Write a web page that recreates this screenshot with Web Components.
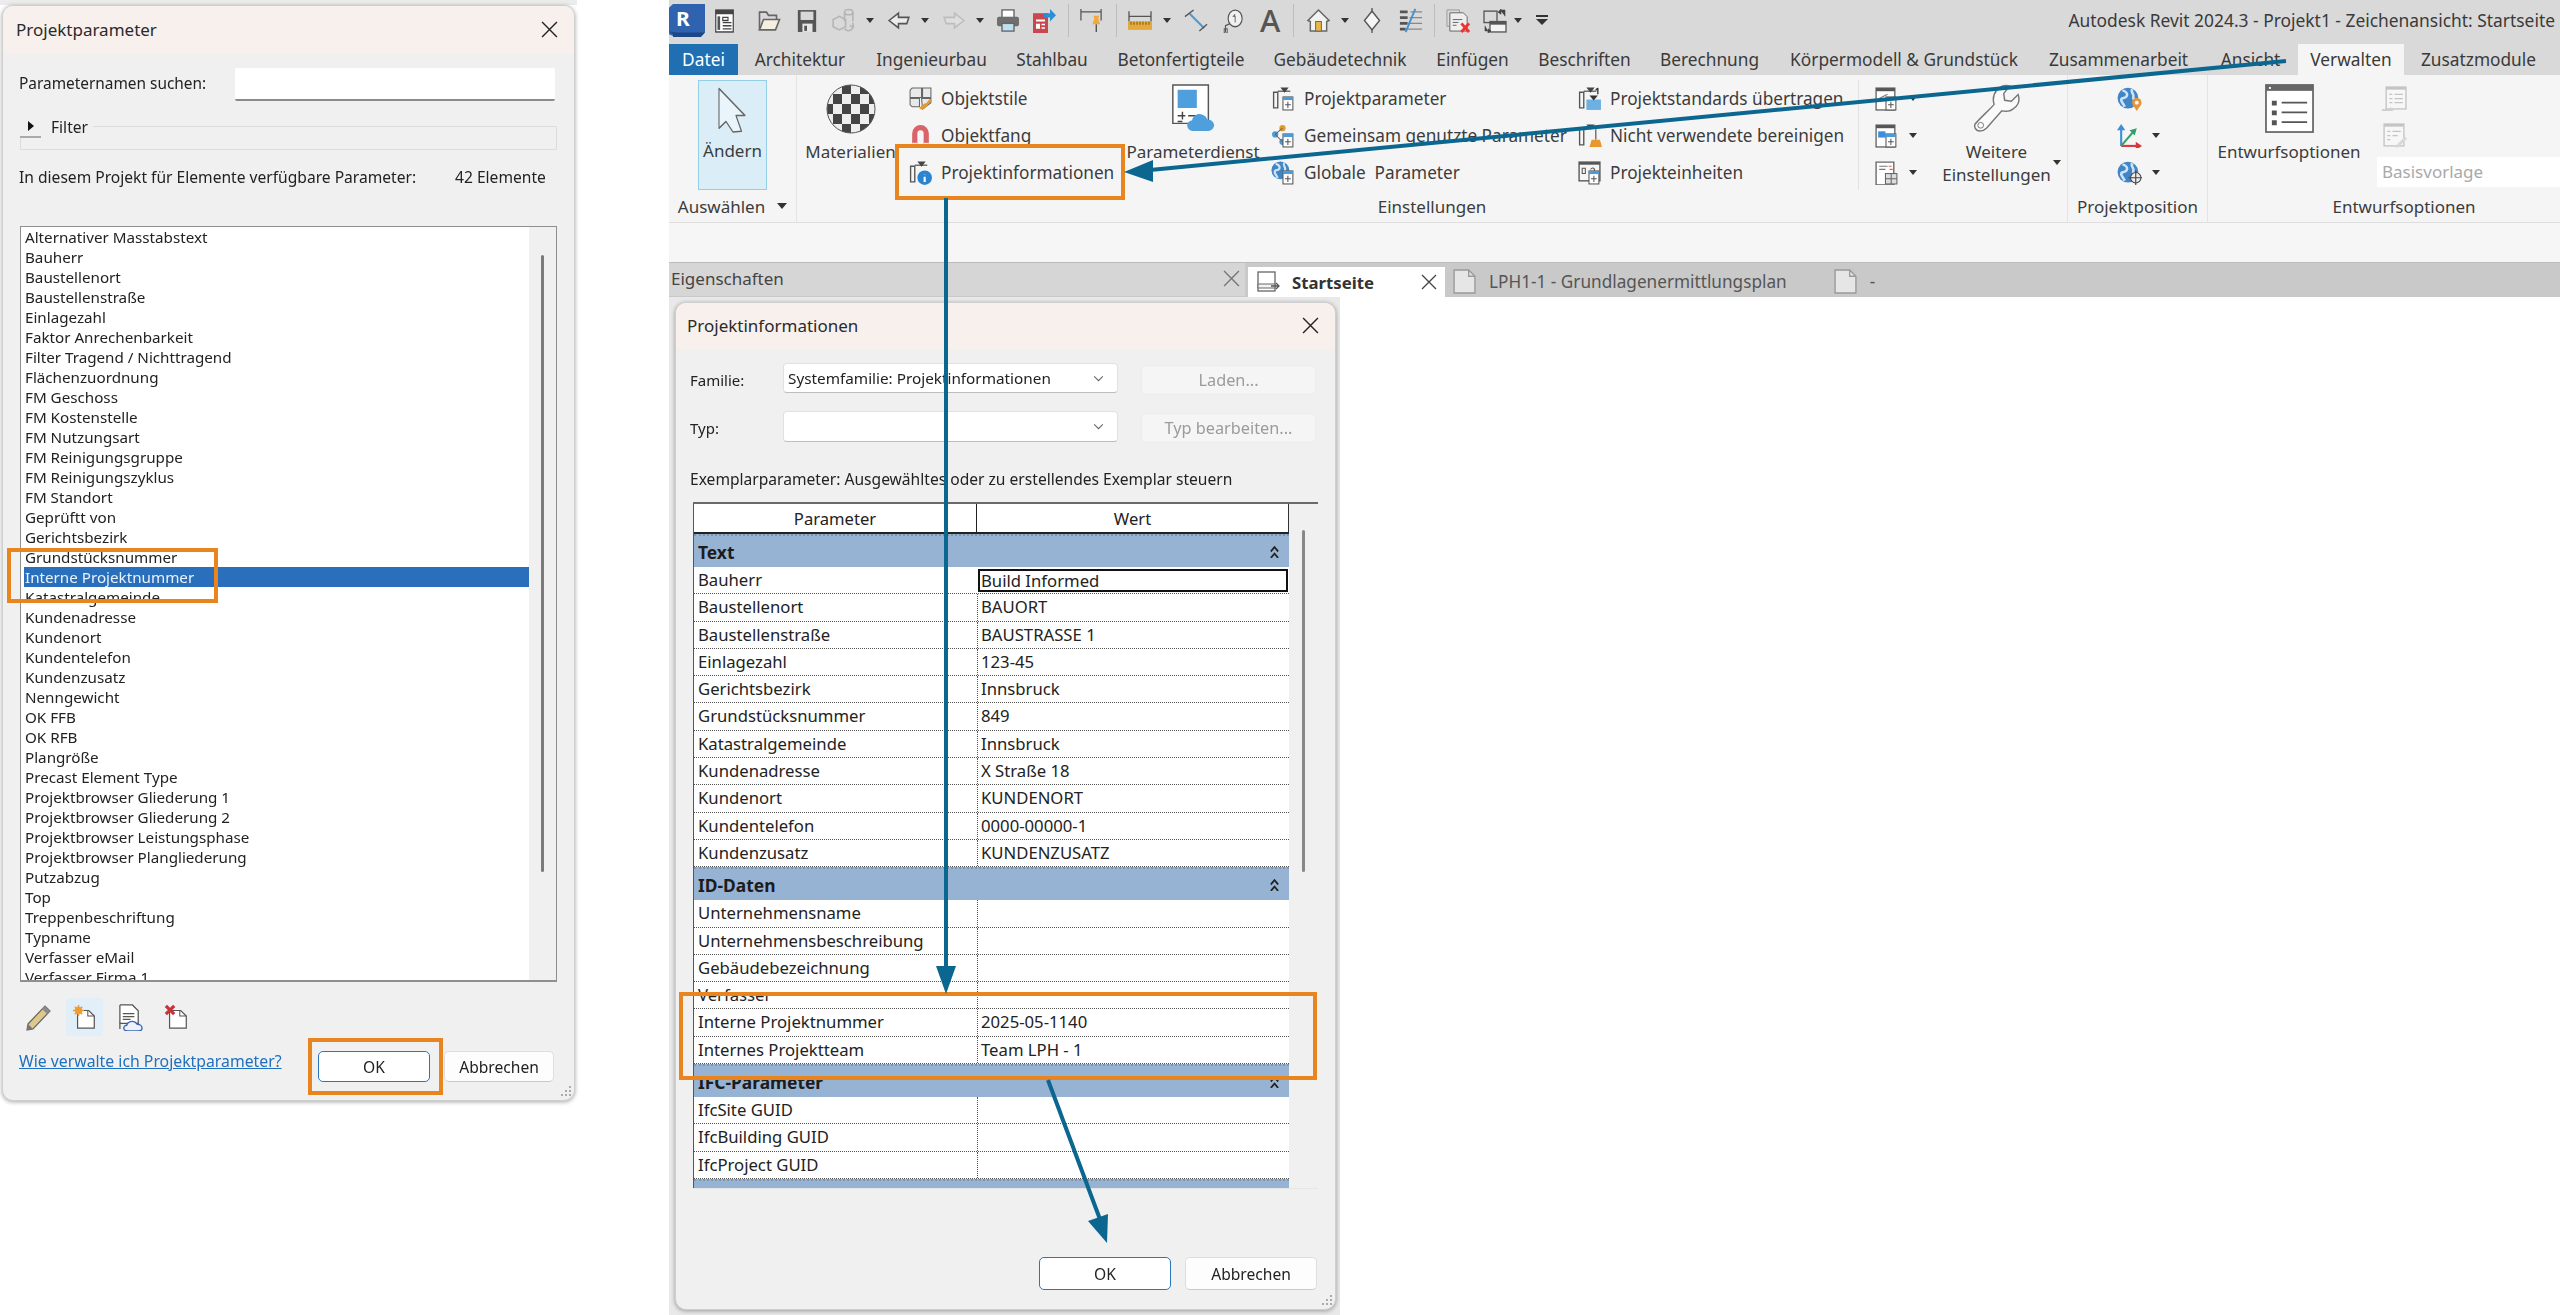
<!DOCTYPE html>
<html lang="de">
<head>
<meta charset="utf-8">
<title>Projektparameter</title>
<style>
  html, body { margin: 0; padding: 0; }
  body {
    width: 2560px; height: 1315px; overflow: hidden; background: #fff; position: relative;
    display: flex; font-family: "Noto Sans", "Open Sans", sans-serif; color: #222;
    filter: blur(.4px);
  }
</style>
</head>
<body>

<params-window>
  <rv-dialog heading="Projektparameter">
    <div style="padding:14px 17px 0;display:flex;flex-direction:column">
      <search-row label="Parameternamen suchen:"></search-row>
      <filter-group></filter-group>
      <count-row label="In diesem Projekt für Elemente verfügbare Parameter:" count="42 Elemente"></count-row>
      <param-list selected="Interne Projektnummer"></param-list>
      <tool-row></tool-row>
      <params-footer></params-footer>
    </div>
  </rv-dialog>
</params-window>

<revit-window>
  <qat-bar></qat-bar>
  <ribbon-tabs></ribbon-tabs>
  <revit-ribbon></revit-ribbon>
  <doc-bar></doc-bar>
  <dock-area>
    <rv-dialog heading="Projektinformationen" compact>
      <info-form></info-form>
    </rv-dialog>
  </dock-area>
</revit-window>

<annotation-layer></annotation-layer>

<script>
const tri = '<path d="M6 9h12l-6 7z" fill="#333"/>';
const protoBase = '<path d="M2.5 6h4v15h-4z" fill="none" stroke="#555" stroke-width="1.3"/><path d="M6.5 5h12" stroke="#555" stroke-width="1.2"/><path d="M9 1.5h8l-4 5z" fill="#444"/>';
const miniTable = '<rect x="11.5" y="10.5" width="9.5" height="12.5" fill="#fff" stroke="#555"/><rect x="11.5" y="10.5" width="9.5" height="3" fill="#4d9bd6"/><path d="M16.2 15v6M13.5 18h5.5" stroke="#555"/>';
const globe = '<circle cx="10" cy="11" r="9.5" fill="#3f86c8"/><path d="M5 4c3 1 5 2 4 5s-4 1-5 3 2 4 3 7M14 3c-2 3 2 4 1 7s3 3 4 2" fill="none" stroke="#cfe3f4" stroke-width="2.4"/>';

const ICONS = {
  props: [24, '<rect x="2" y="2" width="20" height="21" fill="#fff" stroke="#444" stroke-width="1.4"/><rect x="2" y="2" width="20" height="4" fill="#444"/><rect x="4" y="8" width="3" height="13" fill="#555"/><path d="M10 9h6v3h-6zM10 14h10M10 17h10M10 20h10" fill="none" stroke="#444" stroke-width="1.3"/>'],
  open: [24, '<path d="M2.5 21V4h7l2 3h8v4" fill="none" stroke="#666" stroke-width="1.6"/><path d="M2.5 21l4-10h16l-4 10z" fill="#f4efe0" stroke="#666" stroke-width="1.6"/>'],
  save: [24, '<path d="M2 2h20v21H2z" fill="#555"/><rect x="5" y="3.5" width="14" height="8" fill="#d8d8d8"/><rect x="7" y="15" width="11" height="8" fill="#e6e6e6"/><rect x="9" y="17" width="3" height="5" fill="#555"/>'],
  sync: [24, '<g fill="none" stroke="#b5b5b5" stroke-width="1.5"><path d="M2 11l6-3 6 3v7l-6 3-6-3z"/><ellipse cx="17" cy="4" rx="4" ry="2.5"/><path d="M13 4v9M21 4v9"/><path d="M13 20c3 3 7 2 8-2M21 14l.5 4-3.500-1"/></g>'],
  undo: [24, '<path d="M2 12l9-7v4h10l-2 6h-8v4z" fill="#ececec" stroke="#555" stroke-width="1.5"/>'],
  redo: [24, '<path d="M22 12l-9-7v4H3l2 6h8v4z" fill="#dedede" stroke="#bdbdbd" stroke-width="1.5"/>'],
  print: [26, '<rect x="7" y="2" width="12" height="8" fill="#fff" stroke="#666" stroke-width="1.4"/><rect x="2" y="9" width="22" height="10" rx="2" fill="#6e6e6e"/><rect x="7" y="16" width="12" height="8" fill="#bfe0f2" stroke="#666" stroke-width="1.4"/>'],
  reddoc: [24, '<path d="M1 5h15v19H1z" fill="#c9474e"/><path d="M4 11h9v2H4zM4 15h4v5H4zM9.500 15H13v1.500H9.500zM9.500 18.500H13V20H9.500z" fill="#fff"/><path d="M12 5h6V1l6 6-6 6V9h-6z" fill="#2b8fd6"/>'],
  pin: [26, '<path d="M2 1v12M2 4h21M23 1v12" fill="none" stroke="#555" stroke-width="1.3"/><path d="M15 8h6l-1 3 2 6H14l2-6z" fill="#f0a93a"/><path d="M18 17v8" stroke="#555" stroke-width="1.5"/>'],
  measure: [24, '<path d="M1 3v10M1 8h22M23 3v10" fill="none" stroke="#555" stroke-width="1.3"/><rect x="0" y="13" width="24" height="8" fill="#e5a83b"/><path d="M3 13v3M6 13v3M9 13v3M12 13v3M15 13v3M18 13v3M21 13v3" stroke="#7a5a1e"/>'],
  aligned: [26, '<path d="M7 6l15 15" stroke="#4d9bd6" stroke-width="2.2"/><path d="M2 9l9-7M17 24l8-7" stroke="#555" stroke-width="1.400"/>'],
  tag: [24, '<circle cx="15" cy="10" r="8" fill="#f0f0f0" stroke="#555" stroke-width="1.3"/><path d="M15 6l-2 2h2v6" fill="none" stroke="#555"/><path d="M9 15l-5 2v6" fill="none" stroke="#555" stroke-width="1.3"/><rect x="2.500" y="20" width="3.500" height="4" fill="none" stroke="#555"/>'],
  home: [26, '<path d="M13 2L2 13l2.500 1V24h17V14l2.500-1z" fill="#f2f2f2" stroke="#666" stroke-width="1.500"/><rect x="10" y="14" width="6" height="10" fill="#e9b746" stroke="#666"/>'],
  diamond: [24, '<path d="M12 3l9 9-9 9-9-9z" fill="#f5f5f5" stroke="#555" stroke-width="1.600"/><path d="M12 0v3M12 21v3" stroke="#555" stroke-width="1.600"/>'],
  thin: [26, '<path d="M2 4h8M2 10h8M2 16h8M2 22h6" stroke="#555" stroke-width="3"/><path d="M13 4h12M12 10h13M10 16h15M8 22h17" stroke="#888" stroke-width="1.400"/><path d="M18 1L8 25" stroke="#3f93d6" stroke-width="2"/>'],
  closedoc: [26, '<path d="M1 2h13v17H1z" fill="none" stroke="#999"/><path d="M4 5h14l4 4v15H4z" fill="#eee" stroke="#666"/><path d="M7 12h10M7 15h6M7 18h4" stroke="#666"/><path d="M16 16l8 9M24 16l-8 9" stroke="#e33" stroke-width="3"/>'],
  swap: [24, '<rect x="1" y="3" width="13" height="11" fill="none" stroke="#555" stroke-width="1.300"/><rect x="7" y="13" width="16" height="10" fill="#f3f3f3" stroke="#555" stroke-width="1.300"/><rect x="7" y="13" width="16" height="3" fill="#555"/><path d="M17 2h5v6M15 4l3-3v5zM2 17v5h3M5 20v4l3-2z" fill="#444" stroke="#444" stroke-width=".6"/>'],
  cursor: [32, '<path d="M2 1v26.500L9 23l7 7 8.500-.5L19 19h9z" fill="#e9f5fb" stroke="#666" stroke-width="1.100" stroke-linejoin="round"/>'],
  material: [50, '<defs><clipPath id="m"><circle cx="25" cy="25" r="24"/></clipPath></defs><circle cx="25" cy="25" r="24" fill="#eee"/><g clip-path="url(#m)" fill="#444"><path d="M16 1h9v9h-9zM34 1h9v9h-9zM7 10h9v10H7zM25 10h9v10h-9zM43 10h7v10h-7zM0 20h7v10H0zM16 20h9v10h-9zM34 20h9v10h-9zM7 30h9v10H7zM25 30h9v10h-9zM43 30h7v10h-7zM16 40h9v10h-9zM34 40h9v10h-9z"/></g><circle cx="25" cy="25" r="24" fill="none" stroke="#555"/>'],
  objstyle: [24, '<path d="M4 2h9v9H2V4zM14 2h8v9h-8zM2 12h9v8H4l-2-2zM13 12h9v4l-8 6z" fill="#e9e9e9" stroke="#666"/><path d="M11 22c1-4 5-5 7-6l3-4 2 2-4 4c-1 3-4 5-8 4z" fill="#e09a2e"/>'],
  magnet: [24, '<path d="M4 24V10a8 8 0 0116 0v14h-5V10a3 3 0 00-6 0v14z" fill="#d9636b"/><rect x="4" y="19" width="5" height="5" fill="#eee"/><rect x="15" y="19" width="5" height="5" fill="#eee"/>'],
  info: [24, protoBase + '<circle cx="16" cy="17" r="7" fill="#2b84d0"/><path d="M16 14v.1M16 16v5" stroke="#fff" stroke-width="2"/>'],
  service: [50, '<path d="M4 1h37v40H4z" fill="#fff" stroke="#555" stroke-width="1.500"/><rect x="9" y="6" width="20" height="19" fill="#4f9fdc"/><path d="M9 33h8M20 33h8M14 29v8M9 39h5" stroke="#444" stroke-width="1.500"/><path d="M26 49c-5 0-7-3-7-6s3-5 5-5c1-5 6-8 11-6 3 1 4 3 5 5 4 0 7 3 7 6s-3 6-7 6z" fill="#4f9fdc"/>'],
  param: [24, protoBase + miniTable],
  shared: [24, '<circle cx="4" cy="11" r="3" fill="#4d9bd6"/><circle cx="11" cy="5" r="3" fill="#e09a2e"/><circle cx="11" cy="18" r="3" fill="#4d9bd6"/><path d="M4 11l7-6M4 11l7 7" stroke="#666"/>' + miniTable],
  globalp: [24, '<g transform="scale(.9)">' + globe + '</g>' + miniTable],
  transfer: [24, protoBase + '<path d="M20 2v6M20 2l-2 2" stroke="#333" stroke-width="1.300" fill="none"/><rect x="9" y="13" width="14" height="10" fill="#6db1e3"/><path d="M12 9h8l-4 5z" fill="#333"/>'],
  purge: [24, protoBase + '<path d="M18 6v10" stroke="#777" stroke-width="1.500"/><path d="M14 16h8l2 7H12z" fill="#e8982a"/>'],
  units: [24, '<rect x="2" y="2" width="20" height="18" fill="none" stroke="#555" stroke-width="1.300"/><rect x="2" y="2" width="20" height="2.500" fill="#555"/><path d="M5 13v-5h3v5zM13 9c3-3 5 0 3 3" fill="none" stroke="#555"/>' + miniTable],
  mini1: [24, '<rect x="2" y="2" width="18" height="21" fill="#fff" stroke="#666" stroke-width="1.300"/><rect x="2" y="2" width="18" height="3" fill="#555"/><path d="M5 12l8-4" stroke="#777"/>' + miniTable],
  mini2: [24, '<rect x="2" y="2" width="18" height="21" fill="#fff" stroke="#666" stroke-width="1.300"/><rect x="2" y="2" width="18" height="3" fill="#555"/><rect x="4" y="8" width="7" height="6" fill="#3c8fd8"/>' + miniTable],
  mini3: [24, '<path d="M2 2h17v22H2z" fill="#fff" stroke="#666" stroke-width="1.300"/><path d="M5 6h8M5 9h6" stroke="#777"/><path d="M14 6h3M15 9h3" stroke="#d66"/><rect x="11" y="13" width="11" height="10" fill="#ddd" stroke="#666"/><path d="M16.500 13v10M11 18h11" stroke="#666"/>'],
  wrench: [50, '<path d="M7 49c-4 0-6-4-5-7 1-2 20-20 20-21-2-6-1-10 3-15 4-4 9-5 13-4l-6 8 1 7 7 1 7-7c2 6 0 11-4 14-4 4-8 4-13 3L14 46c-2 2-4 3-7 3z" fill="#fafafa" stroke="#777" stroke-width="1.500"/><circle cx="8" cy="43" r="3" fill="none" stroke="#777"/>'],
  geopin: [24, '<g transform="scale(1.050)">' + globe + '</g><circle cx="19" cy="16" r="4.500" fill="#e8943a"/><path d="M15 18l4 6 4-6z" fill="#e8943a"/><circle cx="19" cy="16" r="1.800" fill="#fff"/>'],
  axis: [24, '<path d="M4 22V4" stroke="#3c8fd8" stroke-width="2"/><path d="M4 1L0 7h8z" fill="#3c8fd8"/><path d="M4 22h17" stroke="#d8363c" stroke-width="2"/><path d="M24 22l-6-4v8z" fill="#d8363c"/><path d="M4 22L16 8" stroke="#33a06a" stroke-width="2"/><path d="M19 5l-7 2 5 5z" fill="#33a06a"/>'],
  geotarget: [24, '<g transform="scale(1.050)">' + globe + '</g><circle cx="18" cy="17" r="5" fill="#eee" stroke="#444"/><path d="M18 10v14M11 17h14" stroke="#444" stroke-width="1.100"/>'],
  design: [50, '<rect x="1" y="1" width="48" height="48" fill="#fff" stroke="#666" stroke-width="1.800"/><rect x="1" y="1" width="48" height="6" fill="#666"/><rect x="4" y="3" width="2" height="2" fill="#fff"/><path d="M7 17h5v5H7zM7 27h5v5H7zM7 37h5v5H7z" fill="#555"/><path d="M17 19h26M17 29h26M17 39h26" stroke="#555" stroke-width="1.800"/>'],
  dimadd: [24, '<rect x="4" y="1" width="19" height="21" fill="#f7f7f7" stroke="#c4c4c4" stroke-width="1.300"/><rect x="4" y="1" width="19" height="2.500" fill="#c4c4c4"/><path d="M7 8h3M7 12h3M7 16h3M12 8h8M12 12h8M12 16h8" stroke="#c4c4c4" stroke-width="1.200"/><path d="M0 22h8v-2l3 3-3 3v-2H0z" fill="#cfcfcf"/>'],
  dimedit: [24, '<rect x="2" y="1" width="19" height="21" fill="#f7f7f7" stroke="#c4c4c4" stroke-width="1.300"/><rect x="2" y="1" width="19" height="2.500" fill="#c4c4c4"/><path d="M5 8h3M5 12h3M5 16h3M10 8h8M10 12h5" stroke="#c4c4c4" stroke-width="1.200"/><path d="M14 21l8-8 2 2-8 8-3 1z" fill="#d8d8d8"/>'],
  home2: [24, '<rect x="2" y="2" width="17" height="19" fill="#fff" stroke="#666" stroke-width="1.300"/><path d="M2 14h17v4H2z" fill="#f2f2f2" stroke="#666"/><path d="M15 16h8M20 13l3 3-3 3" fill="none" stroke="#555" stroke-width="1.300"/>'],
  page: [24, '<path d="M2 1h14l6 6v16H2z" fill="#e6e6e6" stroke="#999" stroke-width="1.300"/><path d="M16 1v6h6" fill="none" stroke="#999" stroke-width="1.300"/>'],
  pencil: [28, '<path d="M3 21L20 3l5 5L8 26l-6 1z" fill="#dfc98a" stroke="#666" stroke-width="1.200"/><path d="M20 3l5 5-3 3-5-5z" fill="#8c8c8c"/><path d="M2 27l1-6 5 5z" fill="#777"/>'],
  docnew: [28, '<path d="M6 8h12l6 6v13H6z" fill="#fff" stroke="#555" stroke-width="1.300" transform="translate(0 -1)"/><path d="M17 7v6h7" fill="none" stroke="#555" stroke-width="1.100"/><circle cx="7" cy="7" r="4" fill="#f19c2d"/><path d="M7 1v12M1 7h12M3 3l8 8M11 3l-8 8" stroke="#f19c2d" stroke-width="1.600"/>'],
  doccloud: [28, '<path d="M3 1h13l6 6v13H3v6" fill="#fff" stroke="#555" stroke-width="1.300"/><path d="M3 1v19" stroke="#555" stroke-width="1.300"/><path d="M6 10h12M6 13h12M6 16h8" stroke="#555" stroke-width="1.300"/><path d="M11 28c-3 0-4-2-4-3 0-2 2-3 3-3 1-4 6-5 9-3l2 2c3 0 5 2 5 4s-2 3-4 3z" fill="#eef3fb" stroke="#3a64b8" stroke-width="1.400"/>'],
  docx: [28, '<path d="M6 8h12l6 6v13H6z" fill="#fff" stroke="#555" stroke-width="1.300" transform="translate(0 -1)"/><path d="M17 7v6h7" fill="none" stroke="#555" stroke-width="1.100"/><path d="M2 2l9 9M11 2l-9 9" stroke="#c8323a" stroke-width="3.400"/>'],
  rlogo: [36, '<path d="M0 4l4-4h32v31l-4 4H4l-4-2z" fill="#2f63b0"/><path d="M0 30l4 3v3h28l4-5H8z" fill="#1d4787"/><text x="7" y="24" font-family="Noto Sans" font-weight="700" font-size="21" fill="#fff">R</text>'],
  grip: [14, '<path d="M11 2h2v2h-2zM7 6h2v2H7zM11 6h2v2h-2zM3 10h2v2H3zM7 10h2v2H7zM11 10h2v2h-2z" fill="#aaa"/>'],
  close: [16, '<path d="M1 1l14 14M15 1L1 15" stroke="currentColor" stroke-width="1.300" fill="none"/>'],
  chev: [12, '<path d="M2 6l4-4 4 4M2 12l4-4 4 4" fill="none" stroke="#222" stroke-width="1.800"/>'],
  drop: [12, '<path d="M2 4l4 4 4-4" fill="none" stroke="#666" stroke-width="1"/>'],
  tri: [24, tri]
};

class RvIcon extends HTMLElement {
  connectedCallback() {
    const [vb, inner] = ICONS[this.getAttribute('name')];
    const w = this.getAttribute('size') || 25;
    const h = this.getAttribute('h') || w;
    this.attachShadow({ mode: 'open' });
    this.shadowRoot.innerHTML = `
      <style>:host { display: inline-flex; flex: none; } svg { display: block; }</style>
      <svg width="${w}" height="${h}" viewBox="0 0 ${vb} ${vb}" preserveAspectRatio="none">${inner}</svg>`;
  }
}
customElements.define('rv-icon', RvIcon);

class RvDialog extends HTMLElement {
  constructor() {
    super();
    this.attachShadow({ mode: 'open' });
    const compact = this.hasAttribute('compact');
    this.shadowRoot.innerHTML = `
      <style>
        :host {
          display: block; position: relative; box-sizing: border-box; height: 100%;
          background: #f0f0f0; border: 1px solid #cfcfcf; border-radius: 11px; overflow: hidden;
          box-shadow: 0 1px 4px rgba(0,0,0,.35);
        }
        .title {
          height: ${compact ? 44 : 46}px; background: #f8f0ed; display: flex; align-items: center;
          padding: 0 16px 2px ${compact ? 11 : 13}px; font-size: 17px; color: #2a2a2a;
        }
        .title span { flex: 1; }
        .title rv-icon { color: #222; }
        .grip { position: absolute; right: 2px; bottom: 2px; }
      </style>
      <div class="title"><span>${this.getAttribute('heading')}</span><rv-icon name="close" size="17"></rv-icon></div>
      <slot></slot>
      <rv-icon class="grip" name="grip" size="14"></rv-icon>`;
  }
}
customElements.define('rv-dialog', RvDialog);

class RvButton extends HTMLElement {
  constructor() {
    super();
    this.attachShadow({ mode: 'open' });
    this.shadowRoot.innerHTML = `
      <style>
        :host {
          display: flex; box-sizing: border-box; align-items: center; justify-content: center;
          background: #fdfdfd; border: 1px solid #dedede; border-bottom-color: #c9c9c9; border-radius: 5px;
          font-size: 15.6px; color: #222; width: 110px; height: 31px;
        }
        :host([primary]) { border: 1.5px solid #2b76b9; background: #fff; }
        :host([disabled]) { background: #f5f5f5; color: #9b9b9b; border-color: #ececec; font-size: 16.3px; }
      </style>
      <slot></slot>`;
  }
}
customElements.define('rv-button', RvButton);

class RvSelect extends HTMLElement {
  constructor() {
    super();
    this.attachShadow({ mode: 'open' });
    this.shadowRoot.innerHTML = `
      <style>
        :host {
          display: flex; box-sizing: border-box; align-items: center; background: #fff; border: 1px solid #e1e1e1;
          border-bottom-color: #bdbdbd; border-radius: 4px; padding: 0 12px 0 4px; font-size: 15.3px; color: #222; width: 335px;
        }
        span { flex: 1; white-space: nowrap; }
      </style>
      <span><slot></slot></span><rv-icon name="drop" size="13"></rv-icon>`;
  }
}
customElements.define('rv-select', RvSelect);

class ParamsWindow extends HTMLElement {
  constructor() {
    super();
    this.attachShadow({ mode: 'open' });
    this.shadowRoot.innerHTML = `
      <style>
        :host {
          display: block; flex: none; box-sizing: border-box; width: 669px; height: 1101px;
          padding: 5px 94px 0 2px; background: linear-gradient(#ececec 5px, transparent 5px) no-repeat 0 0 / 577px 5px;
        }
      </style>
      <slot></slot>`;
  }
}
customElements.define('params-window', ParamsWindow);

class SearchRow extends HTMLElement {
  constructor() {
    super();
    this.attachShadow({ mode: 'open' });
    this.shadowRoot.innerHTML = `
      <style>
        :host { display: flex; align-items: center; height: 33px; font-size: 15.4px; margin-left: -1px; }
        span { width: 216px; padding-bottom: 3px; }
        i { display: block; width: 320px; height: 33px; box-sizing: border-box; background: #fff; border-bottom: 2px solid #8a8a8a; border-radius: 2px; }
      </style>
      <span>${this.getAttribute('label')}</span><i></i>`;
  }
}
customElements.define('search-row', SearchRow);

class FilterGroup extends HTMLElement {
  constructor() {
    super();
    this.attachShadow({ mode: 'open' });
    this.shadowRoot.innerHTML = `
      <style>
        :host { display: block; position: relative; height: 34px; margin-top: 15px; font-size: 15.6px; }
        .box { position: absolute; left: 0; right: 0; top: 10px; bottom: 0; border: 1px solid #dcdcdc; border-radius: 1px; }
        .row { position: relative; display: flex; width: max-content; background: #f0f0f0; align-items: center; height: 21px; padding-right: 5px; }
        .arr { width: 21px; height: 23px; box-sizing: border-box; border-bottom: 2px solid #aaa; display: flex; align-items: center; justify-content: center; margin-right: 10px; }
        .arr i { border-left: 6px solid #111; border-top: 5px solid transparent; border-bottom: 5px solid transparent; }
      </style>
      <div class="box"></div>
      <div class="row"><div class="arr"><i></i></div>Filter</div>`;
  }
}
customElements.define('filter-group', FilterGroup);

class CountRow extends HTMLElement {
  constructor() {
    super();
    this.attachShadow({ mode: 'open' });
    this.shadowRoot.innerHTML = `
      <style>
        :host { display: flex; height: 20px; align-items: center; margin: 17px 0 39px -1px; font-size: 15.6px; white-space: nowrap; }
        span { width: 436px; }
      </style>
      <span>${this.getAttribute('label')}</span>${this.getAttribute('count')}`;
  }
}
customElements.define('count-row', CountRow);

const PARAMS = ['Alternativer Masstabstext','Bauherr','Baustellenort','Baustellenstraße','Einlagezahl','Faktor Anrechenbarkeit','Filter Tragend / Nichttragend','Flächenzuordnung','FM Geschoss','FM Kostenstelle','FM Nutzungsart','FM Reinigungsgruppe','FM Reinigungszyklus','FM Standort','Geprüftt von','Gerichtsbezirk','Grundstücksnummer','Interne Projektnummer','Katastralgemeinde','Kundenadresse','Kundenort','Kundentelefon','Kundenzusatz','Nenngewicht','OK FFB','OK RFB','Plangröße','Precast Element Type','Projektbrowser Gliederung 1','Projektbrowser Gliederung 2','Projektbrowser Leistungsphase','Projektbrowser Plangliederung','Putzabzug','Top','Treppenbeschriftung','Typname','Verfasser eMail','Verfasser Firma 1'];

class ParamList extends HTMLElement {
  constructor() {
    super();
    this.attachShadow({ mode: 'open' });
    const sel = this.getAttribute('selected');
    this.shadowRoot.innerHTML = `
      <style>
        :host { display: flex; box-sizing: border-box; height: 756px; background: #fff; border: 1px solid #8f8f8f; border-bottom-width: 2px; font-size: 15.2px; color: #222; overflow: hidden; }
        .items { flex: 1; padding: 0 0 0 3px; overflow: hidden; }
        .it { height: 20px; line-height: 20px; padding-left: 1px; white-space: nowrap; }
        .it.sel { background: #2a6fbb; color: #e8f2fb; }
        .gutter { width: 27px; background: #f0f0f0; position: relative; }
        .gutter i { position: absolute; left: 12px; top: 28px; width: 3px; height: 617px; background: #7b7b7b; border-radius: 2px; }
      </style>
      <div class="items">${PARAMS.map(p => `<div class="it ${p === sel ? 'sel' : ''}">${p}</div>`).join('')}</div>
      <div class="gutter"><i></i></div>`;
  }
}
customElements.define('param-list', ParamList);

class ToolRow extends HTMLElement {
  constructor() {
    super();
    this.attachShadow({ mode: 'open' });
    this.shadowRoot.innerHTML = `
      <style>
        :host { display: flex; align-items: center; height: 38px; margin-top: 16px; }
        .b { width: 37px; height: 38px; display: flex; align-items: center; justify-content: center; border-radius: 3px; margin-right: 9px; }
        .b.on { background: #e2eff8; }
      </style>
      <div class="b"><rv-icon name="pencil" size="28"></rv-icon></div>
      <div class="b on"><rv-icon name="docnew" size="26"></rv-icon></div>
      <div class="b"><rv-icon name="doccloud" size="27"></rv-icon></div>
      <div class="b"><rv-icon name="docx" size="26"></rv-icon></div>`;
  }
}
customElements.define('tool-row', ToolRow);

class ParamsFooter extends HTMLElement {
  constructor() {
    super();
    this.attachShadow({ mode: 'open' });
    this.shadowRoot.innerHTML = `
      <style>
        :host { display: flex; align-items: flex-start; margin-top: 15px; height: 31px; margin-left: -1px; }
        a { flex: none; width: 299px; font-size: 15.8px; color: #1f70bd; text-decoration: underline; line-height: 20px; white-space: nowrap; }
        rv-button + rv-button { margin-left: 14px; }
      </style>
      <a>Wie verwalte ich Projektparameter?</a>
      <rv-button primary style="width:112px">OK</rv-button>
      <rv-button>Abbrechen</rv-button>`;
  }
}
customElements.define('params-footer', ParamsFooter);

class RevitWindow extends HTMLElement {
  constructor() {
    super();
    this.attachShadow({ mode: 'open' });
    this.shadowRoot.innerHTML = `
      <style>:host { display: flex; flex-direction: column; flex: none; width: 1891px; height: 1315px; }</style>
      <slot></slot>`;
  }
}
customElements.define('revit-window', RevitWindow);

// [name, width, gap before]; "sep" and "arrow" are the little separators and drop arrows
const QAT = [['rlogo',36,0],['props',21,9],['open',24,22],['save',22,15],['sync',25,13],['arrow',8,10],['undo',25,13],['arrow',8,9],['redo',25,12],['arrow',8,10],['print',26,11],['reddoc',24,11],['sep',1,12],['pin',25,10],['sep',1,12],['measure',24,11],['arrow',8,11],['aligned',25,12],['tag',21,14],['A',20,17],['sep',1,13],['home',25,12],['arrow',8,10],['diamond',20,13],['thin',25,16],['sep',1,11],['closedoc',25,11],['swap',24,12],['arrow',8,7],['over',12,14]];

class QatBar extends HTMLElement {
  constructor() {
    super();
    this.attachShadow({ mode: 'open' });
    const parts = QAT.map(([n, w, g]) => {
      const st = `margin-left:${g}px`;
      if (n === 'sep') return `<i class="sep" style="${st}"></i>`;
      if (n === 'arrow') return `<i class="arrow" style="${st}"></i>`;
      if (n === 'over') return `<span class="over" style="${st}"><b></b><i class="arrow" style="border-left-width:6px;border-right-width:6px;border-top-width:6px"></i></span>`;
      if (n === 'A') return `<span class="a" style="${st};width:${w}px">A</span>`;
      return `<rv-icon name="${n}" size="${w}" h="${n === 'rlogo' ? 33 : 25}" style="${st}"></rv-icon>`;
    }).join('');
    this.shadowRoot.innerHTML = `
      <style>
        :host { display: flex; align-items: center; height: 44px; flex: none; background: #d9d9d9; padding-bottom: 4px; box-sizing: border-box; }
        .sep { width: 1px; height: 33px; background: #bdbdbd; }
        .arrow { width: 0; height: 0; border-left: 4px solid transparent; border-right: 4px solid transparent; border-top: 5px solid #333; }
        .a { font-size: 31px; font-weight: 500; color: #555; line-height: 32px; text-align: center; }
        .over { display: flex; flex-direction: column; align-items: center; gap: 2px; }
        .over b { display: block; width: 12px; height: 2px; background: #333; }
        .title { margin-left: auto; padding-right: 5px; font-size: 17.4px; color: #3a3a3a; white-space: nowrap; }
      </style>
      ${parts}
      <div class="title">Autodesk Revit 2024.3 - Projekt1 - Zeichenansicht: Startseite</div>`;
  }
}
customElements.define('qat-bar', QatBar);

const TABS = [['Datei',69],['Architektur',124],['Ingenieurbau',139],['Stahlbau',102],['Betonfertigteile',156],['Gebäudetechnik',162],['Einfügen',103],['Beschriften',121],['Berechnung',129],['Körpermodell & Grundstück',260],['Zusammenarbeit',169],['Ansicht',95],['Verwalten',106],['Zusatzmodule',149]];

class RibbonTabs extends HTMLElement {
  constructor() {
    super();
    this.attachShadow({ mode: 'open' });
    this.shadowRoot.innerHTML = `
      <style>
        :host { display: flex; height: 31px; flex: none; background: #d9d9d9; font-size: 17.3px; color: #3a3a3a; }
        div { display: flex; align-items: center; justify-content: center; white-space: nowrap; padding-bottom: 1px; box-sizing: border-box; }
        .file { background: #1f6fb2; color: #fff; }
        .on { background: #f5f5f5; }
      </style>
      ${TABS.map(([t, w]) => `<div class="${t === 'Datei' ? 'file' : t === 'Verwalten' ? 'on' : ''}" style="width:${w}px">${t}</div>`).join('')}`;
  }
}
customElements.define('ribbon-tabs', RibbonTabs);

class RibPanel extends HTMLElement {
  constructor() {
    super();
    this.attachShadow({ mode: 'open' });
    this.shadowRoot.innerHTML = `
      <style>
        :host { display: flex; flex-direction: column; flex: none; box-sizing: border-box; height: 147px; border-right: 1px solid #e4e4e4; }
        .c { display: flex; height: 119px; }
        .l { height: 24px; display: flex; align-items: center; justify-content: center; gap: 12px; font-size: 17px; color: #3c3c3c; white-space: nowrap; }
        i { border-left: 5px solid transparent; border-right: 5px solid transparent; border-top: 6px solid #333; }
      </style>
      <div class="c"><slot></slot></div>
      <div class="l" style="padding-left:${this.getAttribute('shift') || 0}px">${this.getAttribute('label')}${this.hasAttribute('menu') ? '<i></i>' : ''}</div>`;
  }
}
customElements.define('rib-panel', RibPanel);

class RibLarge extends HTMLElement {
  constructor() {
    super();
    this.attachShadow({ mode: 'open' });
    this.shadowRoot.innerHTML = `
      <style>
        :host { display: flex; flex-direction: column; align-items: center; flex: none; box-sizing: border-box; padding-top: 9px; font-size: 17px; line-height: 23px; color: #3c3c3c; text-align: center; white-space: nowrap; }
        .ic { height: 55px; margin-bottom: 1px; }
      </style>
      <div class="ic"><slot name="icon"></slot></div><slot></slot>`;
  }
}
customElements.define('rib-large', RibLarge);

class RibCol extends HTMLElement {
  constructor() {
    super();
    this.attachShadow({ mode: 'open' });
    this.shadowRoot.innerHTML = `
      <style>:host { display: flex; flex-direction: column; flex: none; padding-top: 5px; }</style>
      <slot></slot>`;
  }
}
customElements.define('rib-col', RibCol);

class RibSmall extends HTMLElement {
  constructor() {
    super();
    this.attachShadow({ mode: 'open' });
    const name = this.getAttribute('icon');
    const arrow = this.hasAttribute('arrow');
    this.shadowRoot.innerHTML = `
      <style>
        :host { display: flex; align-items: center; height: 37px; font-size: 17.2px; color: #3c3c3c; white-space: nowrap; }
        rv-icon { margin-right: 8px; }
        i { border-left: 4px solid transparent; border-right: 4px solid transparent; border-top: 5px solid #333; margin-left: 2px; }
      </style>
      <rv-icon name="${name}" size="25"></rv-icon>${arrow ? '<i></i>' : ''}<slot></slot>`;
  }
}
customElements.define('rib-small', RibSmall);

class RevitRibbon extends HTMLElement {
  constructor() {
    super();
    this.attachShadow({ mode: 'open' });
    this.shadowRoot.innerHTML = `
      <style>
        :host { display: block; flex: none; }
        .panels { display: flex; height: 147px; background: #f5f5f5; border-bottom: 1px solid #dedede; }
        .strip { height: 39px; background: #f6f6f6; }
        .modify {
          margin: 5px 0 0 29px; width: 69px; height: 110px; box-sizing: border-box; background: #dbeef8; border: 1px solid #93cfe7;
          display: flex; flex-direction: column; align-items: center; padding-top: 6px; font-size: 17px; color: #3c3c3c; line-height: 23px;
        }
        .modify rv-icon { margin-bottom: 4px; }
        .vsep { width: 1px; height: 110px; background: #e2e2e2; margin-top: 5px; flex: none; }
        .tip { align-self: flex-start; border-left: 4px solid transparent; border-right: 4px solid transparent; border-top: 5px solid #333; margin: 85px 0 0 2px; }
        .combo { margin-top: 3px; width: 191px; height: 30px; box-sizing: border-box; margin-left: -5px; background: #fff; padding-left: 5px; line-height: 30px; font-size: 17px; color: #a9a9a9; }
      </style>
      <div class="panels">
        <rib-panel label="Auswählen" menu style="width:128px">
          <div class="modify"><rv-icon name="cursor" size="32" h="48"></rv-icon>Ändern</div>
        </rib-panel>
        <rib-panel label="Einstellungen" style="width:1271px">
          <rib-large style="width:89px;margin-left:9px"><rv-icon slot="icon" name="material" size="50"></rv-icon>Materialien</rib-large>
          <rib-col style="width:219px;margin-left:13px">
            <rib-small icon="objstyle">Objektstile</rib-small>
            <rib-small icon="magnet">Objektfang</rib-small>
            <rib-small icon="info">Projektinformationen</rib-small>
          </rib-col>
          <rib-large style="width:132px"><rv-icon slot="icon" name="service" size="48"></rv-icon>Parameterdienst</rib-large>
          <rib-col style="width:306px;margin-left:12px">
            <rib-small icon="param">Projektparameter</rib-small>
            <rib-small icon="shared">Gemeinsam genutzte Parameter</rib-small>
            <rib-small icon="globalp">Globale&nbsp; Parameter</rib-small>
          </rib-col>
          <rib-col style="width:281px">
            <rib-small icon="transfer">Projektstandards übertragen</rib-small>
            <rib-small icon="purge">Nicht verwendete bereinigen</rib-small>
            <rib-small icon="units">Projekteinheiten</rib-small>
          </rib-col>
          <div class="vsep"></div>
          <rib-col style="width:52px;margin-left:15px">
            <rib-small icon="mini1" arrow></rib-small>
            <rib-small icon="mini2" arrow></rib-small>
            <rib-small icon="mini3" arrow></rib-small>
          </rib-col>
          <rib-large style="width:109px;margin-left:16px"><rv-icon slot="icon" name="wrench" size="48"></rv-icon>Weitere<br>Einstellungen</rib-large>
          <div class="tip"></div>
        </rib-panel>
        <rib-panel label="Projektposition" style="width:140px">
          <rib-col style="margin-left:49px">
            <rib-small icon="geopin"></rib-small>
            <rib-small icon="axis" arrow></rib-small>
            <rib-small icon="geotarget" arrow></rib-small>
          </rib-col>
        </rib-panel>
        <rib-panel label="Entwurfsoptionen" shift="40" style="width:352px;border-right:0">
          <rib-large style="width:144px;margin-left:9px"><rv-icon slot="icon" name="design" size="49"></rv-icon>Entwurfsoptionen</rib-large>
          <rib-col style="margin-left:21px">
            <rib-small icon="dimadd" style="height:37px"></rib-small>
            <rib-small icon="dimedit" style="height:37px"></rib-small>
            <div class="combo">Basisvorlage</div>
          </rib-col>
        </rib-panel>
      </div>
      <div class="strip"></div>`;
  }
}
customElements.define('revit-ribbon', RevitRibbon);

class DocBar extends HTMLElement {
  constructor() {
    super();
    this.attachShadow({ mode: 'open' });
    this.shadowRoot.innerHTML = `
      <style>
        :host { display: flex; height: 35px; flex: none; background: #c9c9c9; border-top: 1px solid #bcbcbc; box-sizing: border-box; font-size: 17.2px; color: #444; }
        .dock { width: 576px; height: 33px; background: #d6d6d6; display: flex; align-items: center; padding: 0 5px 2px 2px; box-sizing: border-box; font-size: 17px; }
        .dock span { flex: 1; }
        .gap { width: 3px; }
        .home { width: 197px; margin-top: 4px; background: #fff; display: flex; align-items: center; padding: 0 8px; box-sizing: border-box; font-weight: 700; font-size: 16.8px; color: #333; }
        .home rv-icon { margin-right: 12px; }
        .home span { flex: 1; }
        .doc { display: flex; align-items: center; margin-left: 7px; padding-top: 3px; color: #555; white-space: nowrap; }
        .doc rv-icon { margin-right: 12px; }
      </style>
      <div class="dock"><span>Eigenschaften</span><rv-icon name="close" size="17" style="color:#777"></rv-icon></div>
      <div class="gap"></div>
      <div class="home"><rv-icon name="home2" size="24"></rv-icon><span>Startseite</span><rv-icon name="close" size="16" style="margin:0;color:#444"></rv-icon></div>
      <div class="doc"><rv-icon name="page" size="25"></rv-icon>LPH1-1 - Grundlagenermittlungsplan</div>
      <div class="doc" style="margin-left:46px"><rv-icon name="page" size="25"></rv-icon>-</div>`;
  }
}
customElements.define('doc-bar', DocBar);

class DockArea extends HTMLElement {
  constructor() {
    super();
    this.attachShadow({ mode: 'open' });
    this.shadowRoot.innerHTML = `
      <style>
        :host { display: block; box-sizing: border-box; width: 671px; height: 1018px; padding: 5px 4px 5px 6px; background: #e9e9e9; }
      </style>
      <slot></slot>`;
  }
}
customElements.define('dock-area', DockArea);

class PropGroup extends HTMLElement {
  constructor() {
    super();
    this.attachShadow({ mode: 'open' });
    this.shadowRoot.innerHTML = `
      <style>
        :host { display: block; }
        .g { height: 33px; box-sizing: border-box; background: #97b3d3; border-top: 2px dotted #7f95ad; display: flex; align-items: center; padding: 0 9px 0 4px; font-weight: 700; font-size: 17.4px; color: #1c1c1c; }
        .g span { flex: 1; }
      </style>
      <div class="g"><span>${this.getAttribute('name')}</span><rv-icon name="chev" size="11" h="13"></rv-icon></div>
      <slot></slot>`;
  }
}
customElements.define('prop-group', PropGroup);

class PropRow extends HTMLElement {
  constructor() {
    super();
    this.attachShadow({ mode: 'open' });
    const val = this.getAttribute('value') || '';
    const focus = this.hasAttribute('focus');
    this.shadowRoot.innerHTML = `
      <style>
        :host { display: flex; height: 27.3px; box-sizing: border-box; background: #fff; border-bottom: 1px dotted #555; font-size: 16.7px; color: #222; line-height: 26px; white-space: nowrap; }
        .k { width: 283px; padding-left: 4px; box-sizing: border-box; }
        .v { flex: 1; padding-left: 3px; border-left: 1px dotted #555; box-sizing: border-box; overflow: hidden; }
        .v.f { border: 2px solid #111; margin: 2px 1px 1px 1px; padding-left: 1px; line-height: 20px; }
      </style>
      <div class="k">${this.getAttribute('name')}</div><div class="v ${focus ? 'f' : ''}">${val}</div>`;
  }
}
customElements.define('prop-row', PropRow);

class PropTable extends HTMLElement {
  constructor() {
    super();
    this.attachShadow({ mode: 'open' });
    this.shadowRoot.innerHTML = `
      <style>
        :host { display: flex; position: relative; height: 687px; margin: 13px 0 0 17px; width: 625px; box-sizing: border-box; border-top: 2px solid #6a6a6a; border-bottom: 1px solid #e6e6e6; overflow: hidden; }
        .main { width: 596px; flex: none; border-left: 1px solid #555; box-sizing: border-box; overflow: hidden; }
        .head { display: flex; height: 30px; background: #fff; font-size: 16.6px; box-sizing: border-box; border-bottom: 2px solid #222; border-right: 1px solid #333; color: #222; }
        .head div { display: flex; align-items: center; justify-content: center; box-sizing: border-box; }
        .head div:first-child { width: 283px; border-right: 1px solid #222; }
        .head div:last-child { flex: 1; }
        .bar { flex: 1; position: relative; }
        .bar i { position: absolute; left: 13px; top: 26px; width: 3px; height: 342px; background: #888; border-radius: 2px; }
      </style>
      <div class="main">
        <div class="head"><div>Parameter</div><div>Wert</div></div>
        <slot></slot>
      </div>
      <div class="bar"><i></i></div>`;
  }
}
customElements.define('prop-table', PropTable);

class InfoForm extends HTMLElement {
  constructor() {
    super();
    this.attachShadow({ mode: 'open' });
    this.shadowRoot.innerHTML = `
      <style>
        :host { display: block; padding: 14px 0 0 0; }
        .r { display: flex; padding-left: 14px; }
        .l { width: 93px; font-size: 15px; display: flex; align-items: center; padding-top: 2px; box-sizing: border-box; }
        .r rv-button { margin: 2px 0 0 23px; width: 175px; height: 30px; }
        .note { height: 20px; line-height: 20px; margin: 26px 0 1px 14px; font-size: 15.6px; color: #222; white-space: nowrap; }
        .foot { display: flex; justify-content: flex-end; gap: 14px; margin: 68px 18px 0 0; }
        .foot rv-button { width: 132px; height: 33px; }
      </style>
      <div class="r"><div class="l">Familie:</div><rv-select style="height:30px">Systemfamilie: Projektinformationen</rv-select><rv-button disabled>Laden...</rv-button></div>
      <div class="r" style="margin-top:16px"><div class="l">Typ:</div><rv-select style="height:31px"></rv-select><rv-button disabled>Typ bearbeiten...</rv-button></div>
      <div class="note">Exemplarparameter: Ausgewähltes oder zu erstellendes Exemplar steuern</div>
      <prop-table>
        <prop-group name="Text">
          <prop-row name="Bauherr" value="Build Informed" focus></prop-row>
          <prop-row name="Baustellenort" value="BAUORT"></prop-row>
          <prop-row name="Baustellenstraße" value="BAUSTRASSE 1"></prop-row>
          <prop-row name="Einlagezahl" value="123-45"></prop-row>
          <prop-row name="Gerichtsbezirk" value="Innsbruck"></prop-row>
          <prop-row name="Grundstücksnummer" value="849"></prop-row>
          <prop-row name="Katastralgemeinde" value="Innsbruck"></prop-row>
          <prop-row name="Kundenadresse" value="X Straße 18"></prop-row>
          <prop-row name="Kundenort" value="KUNDENORT"></prop-row>
          <prop-row name="Kundentelefon" value="0000-00000-1"></prop-row>
          <prop-row name="Kundenzusatz" value="KUNDENZUSATZ"></prop-row>
        </prop-group>
        <prop-group name="ID-Daten">
          <prop-row name="Unternehmensname"></prop-row>
          <prop-row name="Unternehmensbeschreibung"></prop-row>
          <prop-row name="Gebäudebezeichnung"></prop-row>
          <prop-row name="Verfasser"></prop-row>
          <prop-row name="Interne Projektnummer" value="2025-05-1140"></prop-row>
          <prop-row name="Internes Projektteam" value="Team LPH - 1"></prop-row>
        </prop-group>
        <prop-group name="IFC-Parameter">
          <prop-row name="IfcSite GUID"></prop-row>
          <prop-row name="IfcBuilding GUID"></prop-row>
          <prop-row name="IfcProject GUID"></prop-row>
        </prop-group>
        <prop-group name=""></prop-group>
      </prop-table>
      <div class="foot"><rv-button primary>OK</rv-button><rv-button>Abbrechen</rv-button></div>`;
  }
}
customElements.define('info-form', InfoForm);

// orange frames and blue arrows drawn over the whole collage
class AnnotationLayer extends HTMLElement {
  constructor() {
    super();
    this.attachShadow({ mode: 'open' });
    const frames = [[9,550,207,51],[310,1040,131,53],[897,146,226,52],[681,994,634,84]];
    const lines = [[2286,61,1150,170],[946,198,946,970],[1048,1080,1101,1222]];
    const heads = ['1124,172 1153,160 1153,182','946,994 936,966 956,966','1107,1243 1088,1221 1108,1214'];
    this.shadowRoot.innerHTML = `
      <style>:host { position: absolute; inset: 0; pointer-events: none; } svg { display: block; }</style>
      <svg width="2560" height="1315" viewBox="0 0 2560 1315">
        ${frames.map(([x, y, w, h]) => `<rect x="${x}" y="${y}" width="${w}" height="${h}" fill="none" stroke="#e8851f" stroke-width="4"/>`).join('')}
        ${lines.map(([a, b, c, d]) => `<line x1="${a}" y1="${b}" x2="${c}" y2="${d}" stroke="#0b6690" stroke-width="4"/>`).join('')}
        ${heads.map(p => `<polygon points="${p}" fill="#0b6690"/>`).join('')}
      </svg>`;
  }
}
customElements.define('annotation-layer', AnnotationLayer);
</script>
</body>
</html>
